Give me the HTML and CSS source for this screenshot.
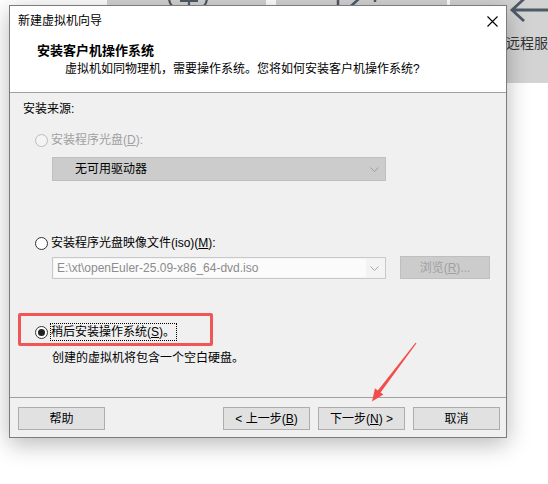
FILE: index.html
```html
<!DOCTYPE html>
<html lang="zh-CN">
<head>
<meta charset="utf-8">
<title>新建虚拟机向导</title>
<link rel="stylesheet" href="styles.css">
</head>
<body>
<div class="desktop">
  <div class="tile tile1">
    <svg class="tile-icon icon1" width="60" height="8" viewBox="0 0 60 8">
      <path d="M10 -8 Q3 -1 9 6" fill="none" stroke="#4e5a65" stroke-width="2.2"/>
      <path d="M40 -8 Q47 -1 41 6" fill="none" stroke="#4e5a65" stroke-width="2.2"/>
      <path d="M17 1 H35 M26 -6 V5" fill="none" stroke="#4e5a65" stroke-width="2.2"/>
    </svg>
  </div>
  <div class="tile tile2">
    <svg class="tile-icon icon2" width="110" height="8" viewBox="0 0 110 8">
      <path d="M62 -6 V6" fill="none" stroke="#4e5a65" stroke-width="2.5"/>
      <path d="M85 -3 L75 6" fill="none" stroke="#4e5a65" stroke-width="2.5"/>
      <path d="M99 -3 V2" fill="none" stroke="#4e5a65" stroke-width="2.5"/>
    </svg>
  </div>
  <div class="tile tile3">
    <svg class="back-arrow" width="40" height="22" viewBox="0 0 40 22">
      <path d="M4 10 H40 M16 -1 L4 10 L16 21" fill="none" stroke="#4e5a65" stroke-width="2.8"/>
    </svg>
    <div class="tile-text">远程服务器</div>
  </div>
</div>

<div class="dialog">
  <div class="titlebar">
    <span class="title">新建虚拟机向导</span>
    <span class="close">
      <svg width="11" height="11" viewBox="0 0 11 11"><path d="M0.5 0.5 L10.5 10.5 M10.5 0.5 L0.5 10.5" stroke="#000" stroke-width="1.1" fill="none"/></svg>
    </span>
  </div>
  <div class="header">
    <div class="h-title">安装客户机操作系统</div>
    <div class="h-sub">虚拟机如同物理机，需要操作系统。您将如何安装客户机操作系统?</div>
  </div>
  <div class="content">
    <div class="group-label">安装来源:</div>
    <div class="option opt-d disabled"><span class="radio"></span><span class="label">安装程序光盘(<u>D</u>):</span></div>
    <div class="select disabled">
      <span class="select-text">无可用驱动器</span>
      <svg class="chev" width="9" height="5" viewBox="0 0 9 5"><path d="M0.5 0.5 L4.5 4.5 L8.5 0.5" fill="none" stroke="#9a9a9a" stroke-width="1"/></svg>
    </div>
    <div class="option opt-m"><span class="radio"></span><span class="label">安装程序光盘映像文件(iso)(<u>M</u>):</span></div>
    <div class="iso-row">
      <div class="combo">
        <span class="combo-text">E:\xt\openEuler-25.09-x86_64-dvd.iso</span>
        <svg class="chev" width="9" height="5" viewBox="0 0 9 5"><path d="M0.5 0.5 L4.5 4.5 L8.5 0.5" fill="none" stroke="#a8a8a8" stroke-width="1"/></svg>
      </div>
      <div class="btn browse">浏览(<u>R</u>)...</div>
    </div>
    <div class="option opt-s"><span class="radio checked"></span><span class="label focus">稍后安装操作系统(<u>S</u>)。</span></div>
    <div class="desc">创建的虚拟机将包含一个空白硬盘。</div>
  </div>
  <div class="footer">
    <div class="btn">帮助</div>
    <div class="nav">
      <div class="btn">&lt; 上一步(<u>B</u>)</div>
      <div class="btn">下一步(<u>N</u>) &gt;</div>
      <div class="btn">取消</div>
    </div>
  </div>
</div>

<div class="highlight"></div>
<svg class="annot-arrow" width="548" height="484" viewBox="0 0 548 484">
  <path d="M416.5 343.3 L380.6 392.4 L383.4 394.6 L372 401.5 L375.0 388.3 L377.8 390.4 L415.5 342.7 Z" fill="#f24e4e"/>
</svg>
</body>
</html>
```
FILE: styles.css
```css
* { box-sizing: border-box; }

body {
  margin: 0;
  width: 548px;
  height: 484px;
  overflow: hidden;
  position: relative;
  background: #ffffff;
  font-family: "Liberation Sans", "Noto Sans CJK SC", sans-serif;
  font-size: 12px;
  color: #000;
}

u { text-decoration: underline; text-underline-offset: 1px; }

/* background desktop */
.desktop {
  display: flex;
  padding-left: 107px;
  height: 83px;
}
.tile {
  background: #d3d3d3;
  height: 83px;
  overflow: hidden;
}
.tile1 { width: 159px; margin-right: 10px; }
.tile2 { width: 171px; margin-right: 3px; }
.tile3 {
  flex: 1;
  display: flex;
  flex-direction: column;
  padding-left: 56px;
  white-space: nowrap;
  overflow: hidden;
}
.tile-icon { display: block; }
.icon1 { margin-left: 56px; }
.icon2 { margin-left: 0; }
.back-arrow { display: block; margin-left: 2px; }
.tile-text {
  margin-top: 12px;
  font-size: 14px;
  line-height: 18px;
  color: #333;
}

/* dialog */
.dialog {
  position: absolute;
  left: 9px;
  top: 5px;
  width: 498px;
  height: 433px;
  border: 1px solid #7c7c7c;
  background: #f0f0f0;
  box-shadow: 0 6px 22px rgba(0, 0, 0, 0.28);
  display: flex;
  flex-direction: column;
}

.titlebar {
  height: 30px;
  background: #fff;
  display: flex;
  align-items: center;
  justify-content: space-between;
  padding-left: 8px;
}
.title { line-height: 18px; }
.close {
  width: 28px;
  height: 30px;
  display: flex;
  align-items: center;
  justify-content: center;
}

.header {
  background: #fff;
  padding: 6px 0 14px 27px;
  border-bottom: 1px solid #a0a0a0;
}
.h-title {
  font-weight: bold;
  font-size: 13px;
  line-height: 18px;
}
.h-sub {
  padding-left: 28px;
  line-height: 18px;
}

.content {
  height: 304px;
  padding-top: 7px;
}
.group-label {
  margin-left: 13px;
  line-height: 18px;
}

.option {
  display: flex;
  align-items: center;
  height: 18px;
  margin-left: 25px;
}
.opt-d { margin-top: 13px; }
.opt-m { margin-top: 53px; }
.opt-s { margin-top: 44px; }

.radio {
  width: 13px;
  height: 13px;
  border: 1px solid #333;
  border-radius: 50%;
  background: #fff;
  margin-right: 3px;
  display: flex;
  align-items: center;
  justify-content: center;
  flex: none;
}
.disabled .radio { border-color: #bcbcbc; background: #f4f4f4; }
.disabled .label { color: #a0a0a0; }
.radio.checked { margin-right: 2px; }
.radio.checked::after {
  content: "";
  width: 7px;
  height: 7px;
  border-radius: 50%;
  background: #222;
}
.label { line-height: 16px; white-space: nowrap; }
.focus {
  border: 1px dotted #000;
  height: 18px;
  line-height: 16px;
  padding: 0 1px 0 0;
}

.select {
  margin: 8px 0 0 42px;
  width: 334px;
  height: 24px;
  background: #cccccc;
  border: 1px solid #bfbfbf;
  display: flex;
  align-items: center;
  justify-content: space-between;
  padding: 0 6px 0 22px;
}
.select-text { line-height: 16px; }

.iso-row {
  display: flex;
  align-items: flex-start;
  margin: 4px 0 0 42px;
}
.combo {
  margin-top: 1px;
  width: 334px;
  height: 22px;
  background: #f3f3f3;
  border: 1px solid #c9c9c9;
  display: flex;
  align-items: center;
  justify-content: space-between;
  padding: 1px 6px 1px 1px;
}
.combo-text {
  flex: none;
  width: 312px;
  height: 18px;
  line-height: 18px;
  padding-left: 3px;
  background: #fbfbfb;
  color: #8c8c8c;
  white-space: nowrap;
}

.btn {
  width: 87px;
  height: 23px;
  background: #e1e1e1;
  border: 1px solid #adadad;
  display: flex;
  align-items: center;
  justify-content: center;
  line-height: 16px;
  white-space: nowrap;
}
.browse {
  margin-left: 14px;
  width: 90px;
  background: #cccccc;
  border-color: #bfbfbf;
  color: #a0a0a0;
}

.desc {
  margin: 8px 0 0 42px;
  line-height: 18px;
}

.footer {
  flex: 1;
  border-top: 1px solid #a0a0a0;
  padding: 9px 6px 0 8px;
  display: flex;
  justify-content: space-between;
  align-items: flex-start;
}
.nav { display: flex; gap: 8px; }

/* annotations */
.highlight {
  position: absolute;
  left: 18px;
  top: 313px;
  width: 195px;
  height: 33px;
  border: 3px solid #f25555;
  border-radius: 2px;
}
.annot-arrow {
  position: absolute;
  left: 0;
  top: 0;
  pointer-events: none;
}
```
